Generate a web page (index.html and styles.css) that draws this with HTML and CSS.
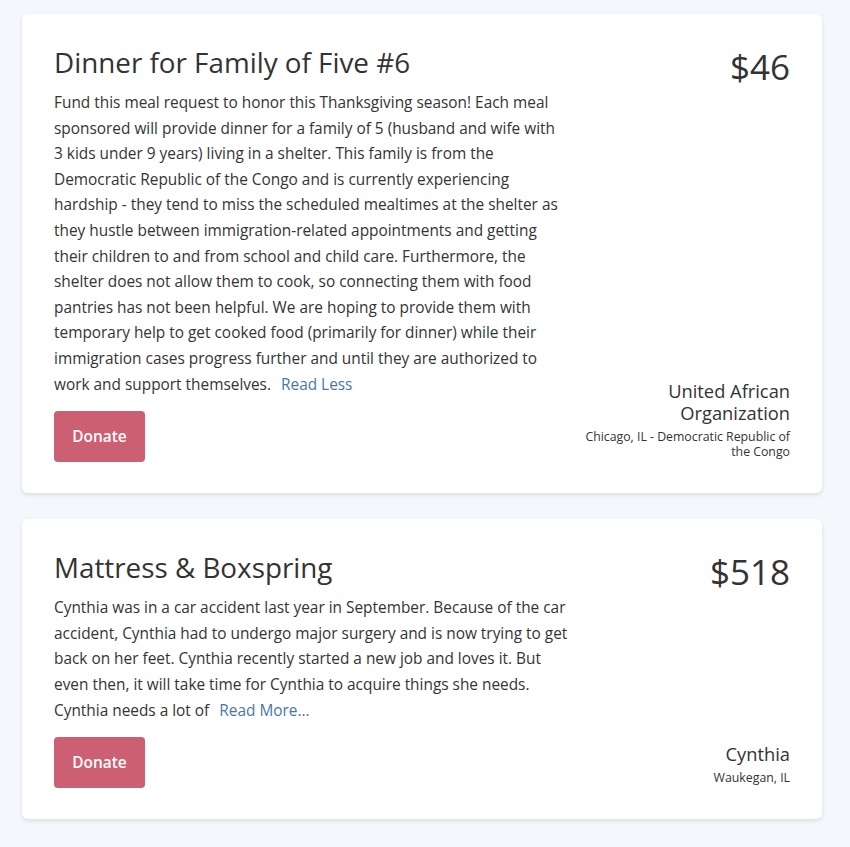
FILE: index.html
```html
<!DOCTYPE html>
<html lang="en">
<head>
<meta charset="utf-8">
<title>Requests</title>
<link rel="stylesheet" href="styles.css">
</head>
<body>
<main class="list">
  <article class="card">
    <div class="main-col">
      <h2 class="title">Dinner for Family of Five #6</h2>
      <p class="desc">Fund this meal request to honor this Thanksgiving season! Each meal<br>
sponsored will provide dinner for a family of 5 (husband and wife with<br>
3 kids under 9 years) living in a shelter. This family is from the<br>
Democratic Republic of the Congo and is currently experiencing<br>
hardship - they tend to miss the scheduled mealtimes at the shelter as<br>
they hustle between immigration-related appointments and getting<br>
their children to and from school and child care. Furthermore, the<br>
shelter does not allow them to cook, so connecting them with food<br>
pantries has not been helpful. We are hoping to provide them with<br>
temporary help to get cooked food (primarily for dinner) while their<br>
immigration cases progress further and until they are authorized to<br>
work and support themselves. <a class="more" href="#">Read Less</a></p>
      <button class="donate" type="button">Donate</button>
    </div>
    <div class="side-col">
      <div class="price">$46</div>
      <div class="org">
        <div class="org-name">United African Organization</div>
        <div class="org-loc">Chicago, IL - Democratic Republic of the Congo</div>
      </div>
    </div>
  </article>
  <article class="card">
    <div class="main-col">
      <h2 class="title">Mattress &amp; Boxspring</h2>
      <p class="desc">Cynthia was in a car accident last year in September. Because of the car<br>
accident, Cynthia had to undergo major surgery and is now trying to get<br>
back on her feet. Cynthia recently started a new job and loves it. But<br>
even then, it will take time for Cynthia to acquire things she needs.<br>
Cynthia needs a lot of <a class="more" href="#">Read More...</a></p>
      <button class="donate" type="button">Donate</button>
    </div>
    <div class="side-col">
      <div class="price">$518</div>
      <div class="org">
        <div class="org-name">Cynthia</div>
        <div class="org-loc">Waukegan, IL</div>
      </div>
    </div>
  </article>
</main>
</body>
</html>
```
FILE: styles.css
```css
* { box-sizing: border-box; }
html, body { margin: 0; padding: 0; }
body {
  background: #f4f7fb;
  font-family: "Open Sans", "Noto Sans", sans-serif;
  color: #343434;
}
.list {
  padding: 14px 28px 20px 22px;
  display: flex;
  flex-direction: column;
  gap: 26px;
}
.card {
  width: 800px;
  background: #fff;
  border-radius: 6px;
  box-shadow: 0 2px 4px rgba(30, 40, 60, 0.12);
  padding: 32px 32px 31px 32px;
  display: flex;
}
.main-col {
  width: 516px;
  flex: 0 0 auto;
}
.title {
  margin: 0 0 12px;
  font-size: 27.8px;
  font-weight: 400;
  line-height: 32px;
  color: #333;
}
.desc {
  margin: 0 0 14px;
  font-size: 15.4px;
  line-height: 25.6px;
  white-space: nowrap;
}
.more {
  color: #4a77a8;
  text-decoration: none;
  margin-left: 6px;
}
.donate {
  display: block;
  border: none;
  border-radius: 4px;
  background: #cc5f71;
  color: #fff;
  font-family: inherit;
  font-size: 15.4px;
  font-weight: 600;
  line-height: 25px;
  padding: 13px 0;
  width: 91px;
  cursor: pointer;
}
.side-col {
  flex: 1;
  min-width: 0;
  display: flex;
  flex-direction: column;
  justify-content: space-between;
  align-items: flex-end;
  text-align: right;
}
.price {
  font-size: 35px;
  line-height: 42px;
  color: #333;
}
.org {
  width: 100%;
  margin-bottom: 3px;
}
.org-name {
  font-size: 18.3px;
  line-height: 22px;
  color: #333;
}
.org-loc {
  margin-top: 5px;
  font-size: 12.3px;
  line-height: 15px;
  color: #333;
}
```
